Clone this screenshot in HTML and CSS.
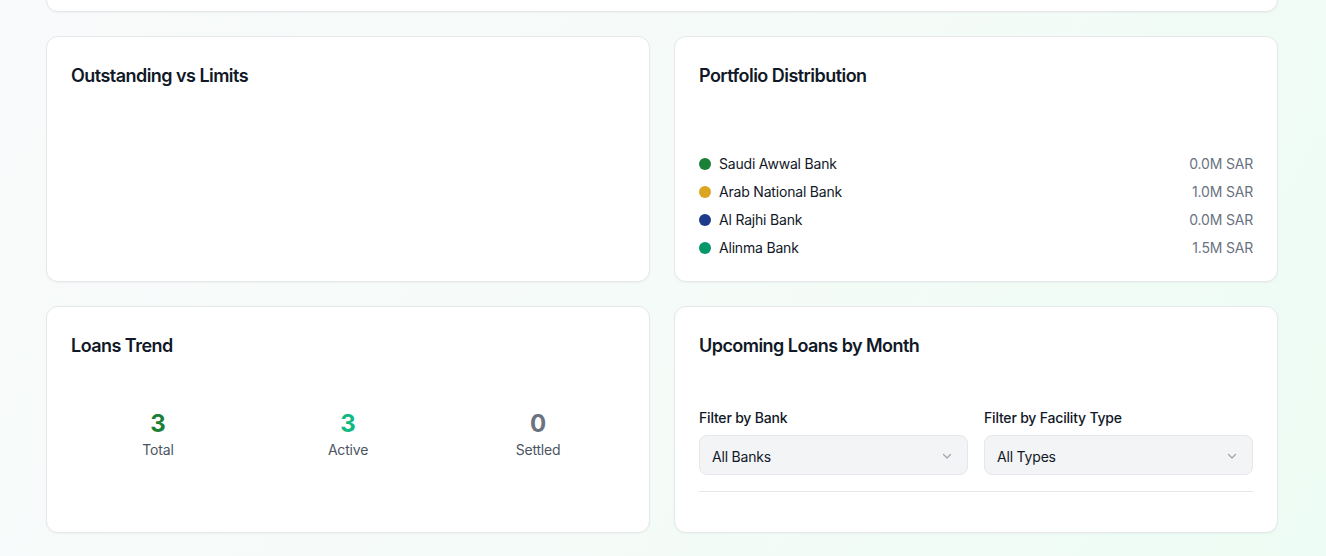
FILE: index.html
```html
<!DOCTYPE html>
<html lang="en">
<head>
<meta charset="utf-8">
<title>Dashboard</title>
<link rel="stylesheet" href="styles.css">
</head>
<body>
<div class="page">
  <div class="card top-card"></div>
  <div class="grid">
    <section class="card">
      <h2 class="card-title">Outstanding vs Limits</h2>
    </section>
    <section class="card">
      <h2 class="card-title">Portfolio Distribution</h2>
      <div class="chart-space"></div>
      <ul class="legend">
        <li class="legend-item"><span class="legend-name"><span class="dot dot-awwal"></span>Saudi Awwal Bank</span><span class="legend-value">0.0M SAR</span></li>
        <li class="legend-item"><span class="legend-name"><span class="dot dot-anb"></span>Arab National Bank</span><span class="legend-value">1.0M SAR</span></li>
        <li class="legend-item"><span class="legend-name"><span class="dot dot-rajhi"></span>Al Rajhi Bank</span><span class="legend-value">0.0M SAR</span></li>
        <li class="legend-item"><span class="legend-name"><span class="dot dot-alinma"></span>Alinma Bank</span><span class="legend-value">1.5M SAR</span></li>
      </ul>
    </section>
    <section class="card card-col">
      <h2 class="card-title">Loans Trend</h2>
      <div class="stats">
        <div class="stat"><div class="stat-num num-total">3</div><div class="stat-label">Total</div></div>
        <div class="stat"><div class="stat-num num-active">3</div><div class="stat-label">Active</div></div>
        <div class="stat"><div class="stat-num num-settled">0</div><div class="stat-label">Settled</div></div>
      </div>
    </section>
    <section class="card">
      <h2 class="card-title">Upcoming Loans by Month</h2>
      <div class="filters">
        <div class="field">
          <label class="field-label">Filter by Bank</label>
          <div class="select"><span>All Banks</span>
            <svg class="chev" width="12" height="12" viewBox="0 0 12 12"><path d="M2.5 4.5 6 8l3.5-3.5" fill="none" stroke="#9ca3af" stroke-width="1.2" stroke-linecap="round" stroke-linejoin="round"/></svg>
          </div>
        </div>
        <div class="field">
          <label class="field-label">Filter by Facility Type</label>
          <div class="select"><span>All Types</span>
            <svg class="chev" width="12" height="12" viewBox="0 0 12 12"><path d="M2.5 4.5 6 8l3.5-3.5" fill="none" stroke="#9ca3af" stroke-width="1.2" stroke-linecap="round" stroke-linejoin="round"/></svg>
          </div>
        </div>
      </div>
      <div class="after-filters"></div>
    </section>
  </div>
</div>
</body>
</html>
```

FILE: styles.css
```css
* { box-sizing: border-box; }
html, body { height: 100%; }
body {
  margin: 0;
  font-family: Inter, "Noto Sans", sans-serif;
  color: #111827;
  background: linear-gradient(120deg, #f9fafb 0%, #f5fbf8 50%, #edfcf4 100%);
  overflow: hidden;
  letter-spacing: -0.012em;
}
.page {
  width: 1232px;
  margin-left: 46px;
}
.card {
  background: #fff;
  border: 1px solid #e5e7eb;
  border-radius: 12px;
  padding: 25px 24px 23px;
  box-shadow: 0 1px 2px rgba(0, 0, 0, 0.04);
}
.top-card {
  height: 100px;
  margin-top: -88px;
  margin-bottom: 24px;
}
.grid {
  display: grid;
  grid-template-columns: 1fr 1fr;
  gap: 24px;
}
.card-title {
  margin: 0;
  font-size: 18px;
  line-height: 28px;
  font-weight: 600;
  letter-spacing: -0.03em;
  color: #111827;
}
.chart-space { height: 64px; }
.legend {
  list-style: none;
  margin: 0;
  padding: 0;
  display: flex;
  flex-direction: column;
  gap: 8px;
}
.legend-item {
  display: flex;
  justify-content: space-between;
  align-items: center;
  font-size: 14px;
  line-height: 20px;
}
.legend-name { display: flex; align-items: center; gap: 8px; color: #111827; }
.legend-value { color: #6b7280; }
.dot { width: 12px; height: 12px; border-radius: 50%; display: inline-block; }
.dot-awwal { background: #1a7f37; }
.dot-anb { background: #daa520; }
.dot-rajhi { background: #1e3a8a; }
.dot-alinma { background: #059669; }
.card-col { display: flex; flex-direction: column; }
.stats {
  flex: 1;
  display: grid;
  grid-template-columns: repeat(3, 1fr);
  gap: 16px;
  align-content: center;
  text-align: center;
  padding-bottom: 2px;
}
.stat-num { font-size: 24px; line-height: 32px; font-weight: 700; }
.num-total { color: #1a7f37; }
.num-active { color: #10b981; }
.num-settled { color: #6b7280; }
.stat-label { font-size: 14px; line-height: 20px; color: #4b5563; }
.filters {
  margin-top: 48px;
  padding-bottom: 16px;
  border-bottom: 1px solid #e5e7eb;
  display: grid;
  grid-template-columns: 1fr 1fr;
  gap: 16px;
}
.field-label {
  display: block;
  font-size: 14px;
  line-height: 20px;
  font-weight: 500;
  color: #111827;
  margin-bottom: 7px;
}
.select {
  height: 40px;
  border: 1px solid #e5e7eb;
  border-radius: 8px;
  background: #f3f4f6;
  padding: 2px 12px 0;
  display: flex;
  align-items: center;
  justify-content: space-between;
  font-size: 14px;
  color: #111827;
}
.chev { margin-right: 2px; }
.after-filters { height: 17px; }
```
